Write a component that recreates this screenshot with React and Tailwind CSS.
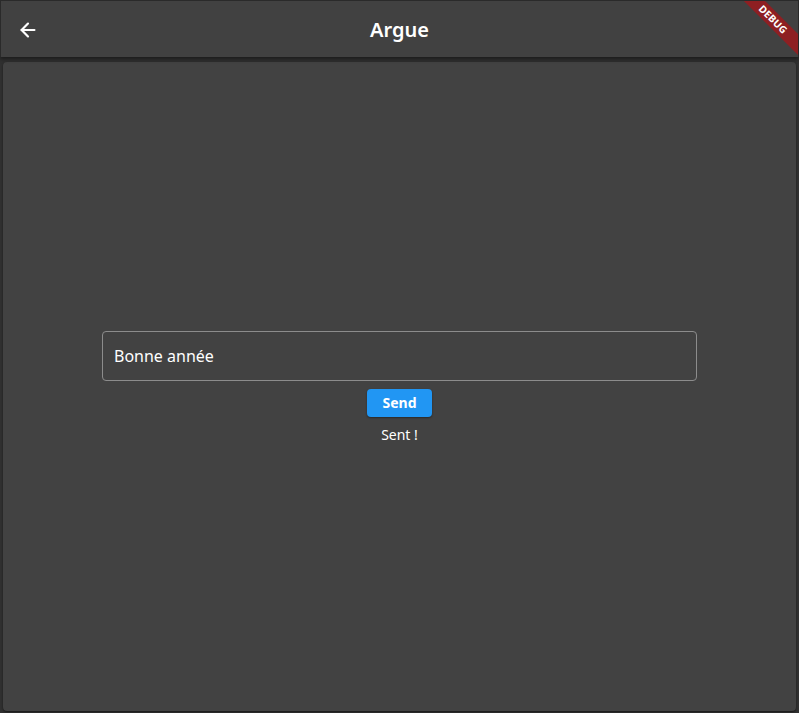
import React from 'react';
import { ArrowLeft } from 'lucide-react';

function DebugBanner() {
  return (
    <div className="pointer-events-none absolute right-0 top-0 h-[60px] w-[60px] overflow-hidden">
      <div className="absolute right-[-30px] top-[11px] w-[110px] rotate-45 bg-[#8e1f22] py-[1px] text-center text-[10px] font-bold leading-[13px] tracking-wide text-white">
        DEBUG
      </div>
    </div>
  );
}

export default function App() {
  return (
    <div className="relative flex h-[713px] w-[799px] flex-col overflow-hidden bg-[#303030] font-['Noto_Sans',sans-serif] text-white">
      <header className="relative z-10 flex h-[57px] shrink-0 items-center border border-b-0 border-[#2a2a2a] bg-[#414141] shadow-[0_2px_4px_rgba(0,0,0,0.45)]">
        <button className="ml-[15px] mt-[1px] flex h-6 w-6 items-center justify-center">
          <ArrowLeft size={22} strokeWidth={2.4} />
        </button>
        <h1 className="absolute left-0 right-0 mt-[1px] text-center text-[20px] font-semibold">Argue</h1>
        <DebugBanner />
      </header>

      <main className="mx-[3px] mb-[2px] mt-[5px] flex flex-1 flex-col items-center justify-center rounded-[4px] bg-[#424242] pt-[2px] shadow-[0_1px_2px_rgba(0,0,0,0.5)]">
        <div className="flex h-[50px] w-[595px] items-center rounded-[4px] border border-[#8c8c8c] px-[11px] text-[16px]">
          Bonne année
        </div>
        <button className="mt-[8px] h-[28px] w-[65px] rounded-[4px] bg-[#2196f3] text-[14px] font-bold shadow-[0_1px_2px_rgba(0,0,0,0.4)]">
          Send
        </button>
        <p className="mt-[7px] text-[14px]">Sent !</p>
      </main>
    </div>
  );
}
